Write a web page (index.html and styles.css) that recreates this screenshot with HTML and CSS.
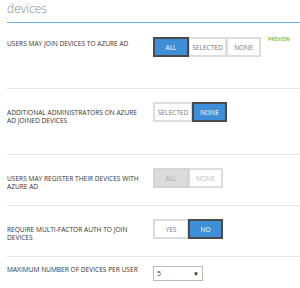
FILE: index.html
```
<!DOCTYPE html>
<html lang="en">
<head>
    <meta charset="UTF-8">
    <title>devices</title>
    <link rel="stylesheet" href="styles.css">
</head>
<body>
    <div class="panel">
        <h2 class="title">devices</h2>

        <div class="row row-first">
            <div class="label">USERS MAY JOIN DEVICES TO AZURE AD</div>
            <div class="toggle">
                <span class="opt on w-all">ALL</span>
                <span class="opt w-sel">SELECTED</span>
                <span class="opt w-none">NONE</span>
            </div>
            <span class="preview">PREVIEW</span>
        </div>

        <div class="row row-tall">
            <div class="label">ADDITIONAL ADMINISTRATORS ON AZURE AD JOINED DEVICES</div>
            <div class="toggle">
                <span class="opt w-sel2">SELECTED</span>
                <span class="opt on w-none">NONE</span>
            </div>
        </div>

        <div class="row">
            <div class="label">USERS MAY REGISTER THEIR DEVICES WITH AZURE AD</div>
            <div class="toggle disabled">
                <span class="opt on w-all">ALL</span>
                <span class="opt w-none">NONE</span>
            </div>
        </div>

        <div class="row">
            <div class="label">REQUIRE MULTI-FACTOR AUTH TO JOIN DEVICES</div>
            <div class="toggle">
                <span class="opt w-all">YES</span>
                <span class="opt on w-none">NO</span>
            </div>
        </div>

        <div class="row row-last">
            <div class="label">MAXIMUM NUMBER OF DEVICES PER USER</div>
            <div class="select">
                <span>5</span>
                <span class="arrow">&#9660;</span>
            </div>
        </div>
    </div>
</body>
</html>
```

FILE: styles.css
```
body {
    margin: 0;
    font-family: "Open Sans", "Liberation Sans", sans-serif;
    background: #fff;
}
.panel {
    padding-left: 7px;
}
.title {
    box-sizing: border-box;
    margin: 0;
    padding-top: 2px;
    height: 23px;
    font-size: 12px;
    font-weight: 300;
    color: #8a8a8a;
    line-height: 14px;
    border-bottom: 1px solid #6eaee4;
}
.row {
    display: flex;
    align-items: flex-start;
    padding: 13px 0 14px;
    border-bottom: 1px solid #e6e6e6;
}
.row-first {
    padding-top: 14px;
    padding-bottom: 31px;
}
.row-tall {
    padding-bottom: 29px;
}
.row-last {
    border-bottom: none;
    padding-top: 9px;
}
.label {
    width: 134px;
    margin-right: 12px;
    padding-top: 7px;
    font-size: 6.6px;
    line-height: 8px;
    color: #333;
}
.row-first .label {
    padding-top: 3px;
}
.row-last .label {
    padding-top: 0;
}
.toggle {
    display: flex;
    height: 20px;
}
.opt {
    box-sizing: border-box;
    height: 20px;
    display: flex;
    align-items: center;
    justify-content: center;
    font-size: 6.6px;
    color: #777;
    background: #fff;
    border: 2px solid #ddd;
    margin-left: -1px;
}
.opt:first-child {
    margin-left: 0;
}
.opt.on {
    background: #3f8fd8;
    color: #fff;
    border-color: #4a4a4a;
    position: relative;
}
.w-all { width: 36px; }
.w-sel { width: 39px; }
.w-sel2 { width: 40px; }
.w-none { width: 35px; }
.toggle.disabled .opt {
    color: #bbb;
    border-color: #ddd;
}
.toggle.disabled .opt.on {
    background: #dcdcdc;
    color: #aaa;
    border-color: #d4d4d4;
}
.preview {
    margin-left: 7px;
    margin-top: -1px;
    font-size: 5px;
    font-weight: bold;
    color: #8cc63f;
}
.select {
    box-sizing: border-box;
    width: 50px;
    height: 15px;
    border: 1px solid #bbb;
    display: flex;
    justify-content: space-between;
    align-items: center;
    padding: 0 3px;
    font-size: 7px;
    color: #333;
}
.arrow {
    font-size: 6px;
    color: #222;
}
```
